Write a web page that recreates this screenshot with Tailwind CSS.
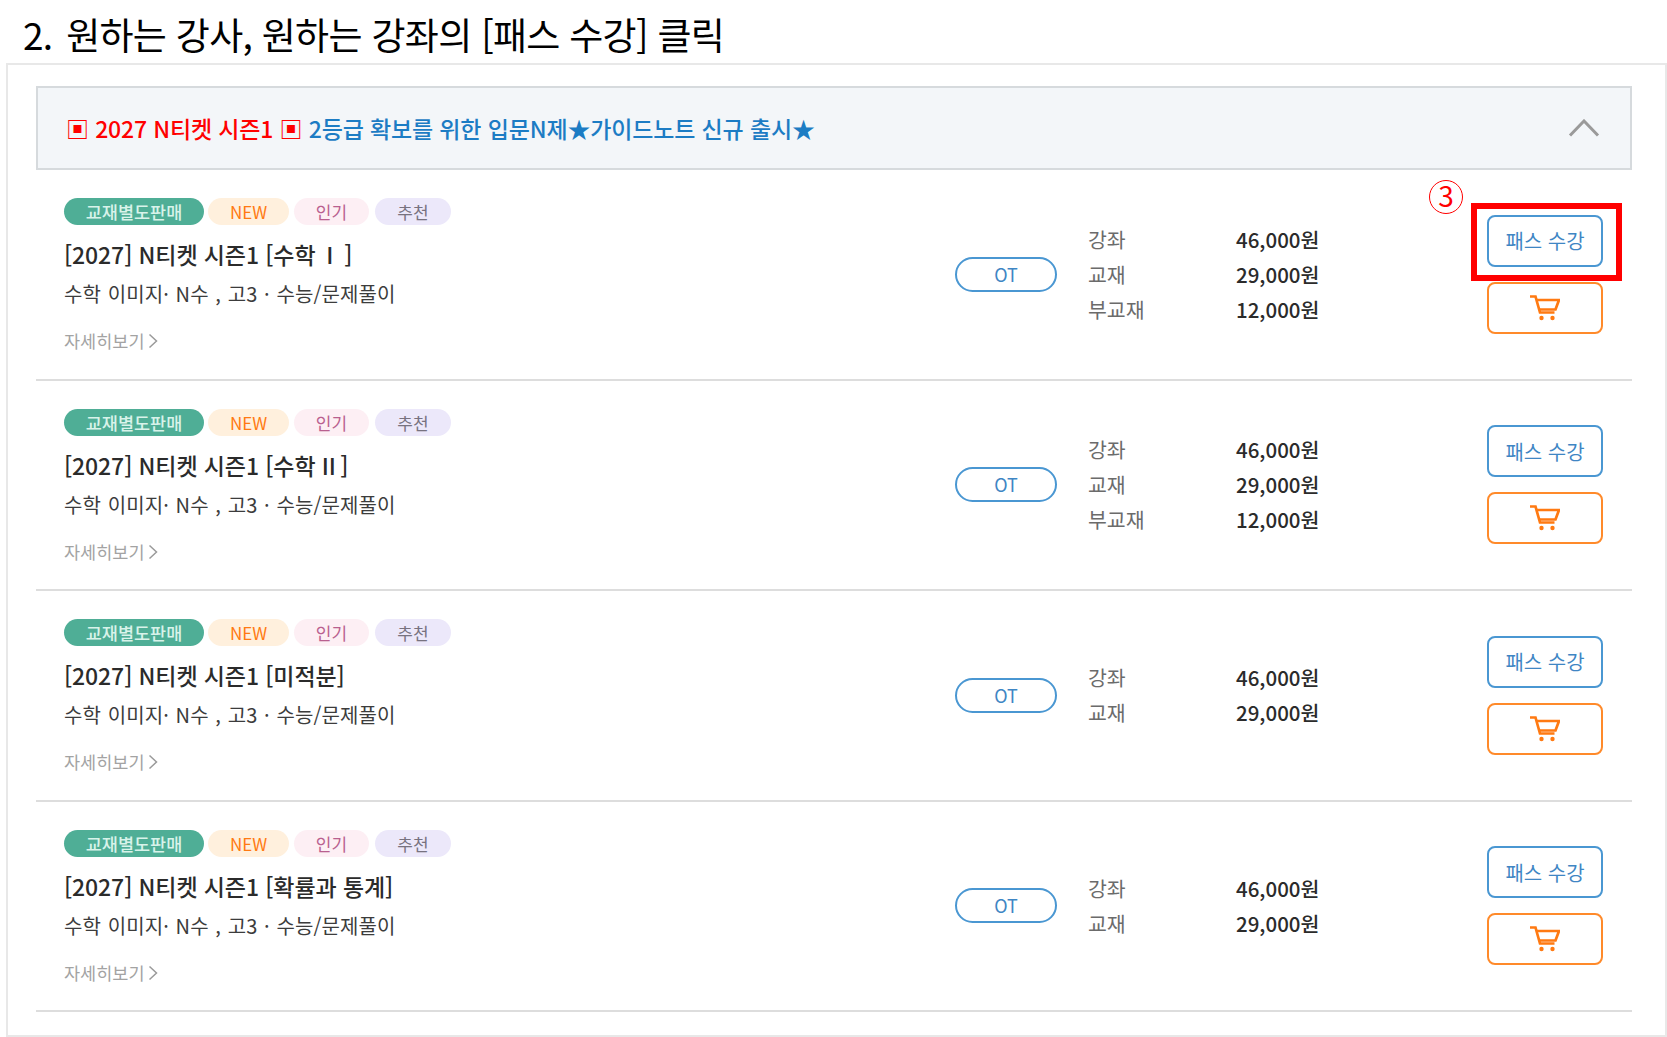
<!DOCTYPE html>
<html lang="ko">
  <head>
    <meta charset="UTF-8" />
    <script src="https://cdn.jsdelivr.net/npm/@tailwindcss/browser@4"></script>
    <title>패스 수강</title>
  </head>
  <body class="bg-white font-['Noto_Sans_CJK_KR','Noto_Sans',sans-serif]">
    <div class="w-[1667px] h-[1037px] overflow-hidden">
      <h1 class="h-[63px] pl-[23px] pt-[6px] text-[37px] leading-[56px] text-black tracking-[-0.7px]"><span class="mr-[4px]">2.</span> 원하는 강사, 원하는 강좌의 [패스 수강] 클릭</h1>

      <div class="ml-[6px] h-[974px] border-2 border-[#e8e8e8] pt-[21px] pl-[28px] pr-[33px]">
        <div class="flex items-center justify-between h-[84px] border-2 border-[#d6dadd] bg-[#f3f6f9] pl-[28px] pr-[30px]">
          <p class="text-[23px] font-medium tracking-[-0.15px]">
            <span class="text-[#ff0000]">▣ 2027 N티켓 시즌1 ▣</span>
            <span class="text-[#1c7cc4]">2등급 확보를 위한 입문N제★가이드노트 신규 출시★</span>
          </p>
          <svg width="32" height="18" viewBox="0 0 32 18" fill="none" stroke="#9a9a9a" stroke-width="3"><path d="M2 16.5 16 2l14 14.5" /></svg>
        </div>

        <div id="list"></div>
      </div>
    </div>

    <script>
      const courses = [
        { title: "[2027] N티켓 시즌1 [수학 \u2009I\u2009 ]", book2: true, marked: true },
        { title: "[2027] N티켓 시즌1 [수학 II\u2009]", book2: true },
        { title: "[2027] N티켓 시즌1 [미적분]" },
        { title: "[2027] N티켓 시즌1 [확률과 통계]" },
      ];

      const cart = `<svg width="30" height="26" viewBox="0 0 30 26" fill="none" stroke="#ff7a12" stroke-width="2.700"><path d="M0 1.500h5.500l4.500 16h14.500" /><path d="M6.500 5h22.500l-3.500 9.500H9.500" /><circle cx="11.500" cy="23" r="2.200" fill="#ff7a12" stroke="none" /><circle cx="22.500" cy="23" r="2.200" fill="#ff7a12" stroke="none" /></svg>`;

      document.getElementById("list").innerHTML = courses
        .map(
          (c) => `
        <div class="flex items-center h-[210.500px] border-b-2 border-[#dddddd]">
          <div class="flex-1 self-start pl-[28px] pt-[28px]">
            <div class="flex leading-[27px] text-center">
              <span class="w-[140px] h-[27px] rounded-full bg-[#4fae96] text-[#d8f3ea] text-[17.500px] font-medium">교재별도판매</span>
              <span class="w-[81px] h-[27px] ml-[4px] rounded-full bg-[#fff0dd] text-[#ff7a12] text-[17px]">NEW</span>
              <span class="w-[75px] h-[27px] ml-[5px] rounded-full bg-[#fdeff4] text-[#b9608f] text-[17px]">인기</span>
              <span class="w-[76px] h-[27px] ml-[6px] rounded-full bg-[#ece8fa] text-[#77727f] text-[17px]">추천</span>
            </div>
            <p class="mt-[12px] text-[23px] leading-[34px] font-medium text-[#2b2b2b] tracking-[-0.1px]">${c.title}</p>
            <p class="mt-[8px] text-[20px] leading-[30px] text-[#3c3c3c] tracking-[0.1px] [word-spacing:1px]">수학 이미지· N수 , 고3 · 수능/문제풀이</p>
            <p class="mt-[17px] flex items-center text-[17.500px] leading-[30px] text-[#a3a3a3]">자세히보기<svg class="ml-[3px]" width="10" height="16" viewBox="0 0 10 16" fill="none" stroke="#9a9a9a" stroke-width="1.500"><path d="M1.500 1.500 8.500 8l-7 6.500" /></svg></p>
          </div>

          <div class="w-[102px] h-[35px] rounded-full border-2 border-[#4a97d2] text-center text-[18px] leading-[31px] text-[#3f86c4]">OT</div>

          <dl class="ml-[31px] w-[399px] grid grid-cols-[148px_1fr] text-[20.500px] leading-[35px]">
            <dt class="text-[#6b6b6b]">강좌</dt><dd class="font-medium text-[#2b2b2b]">46,000원</dd>
            <dt class="text-[#6b6b6b]">교재</dt><dd class="font-medium text-[#2b2b2b]">29,000원</dd>
            ${c.book2 ? '<dt class="text-[#6b6b6b]">부교재</dt><dd class="font-medium text-[#2b2b2b]">12,000원</dd>' : ""}
          </dl>

          <div class="relative w-[116px] mr-[29px] flex flex-col gap-[15px]">
            <button class="h-[52px] pt-[1px] rounded-[8px] border-2 border-[#4a97d2] bg-white text-[20px] text-[#3f86c4]">패스 수강</button>
            <button class="h-[52px] rounded-[8px] border-2 border-[#ff8a2a] bg-white flex items-center justify-center">${cart}</button>
            ${
              c.marked
                ? `<div class="absolute left-[-16px] top-[-12px] w-[151px] h-[78px] border-[6px] border-[#ff0000]"></div>
            <div class="absolute left-[-58px] top-[-35px] w-[34px] h-[34px] rounded-full border-[1.500px] border-[#ff0000] text-center text-[28px] leading-[29px] text-[#ff0000]">3</div>`
                : ""
            }
          </div>
        </div>`
        )
        .join("");
    </script>
  </body>
</html>
